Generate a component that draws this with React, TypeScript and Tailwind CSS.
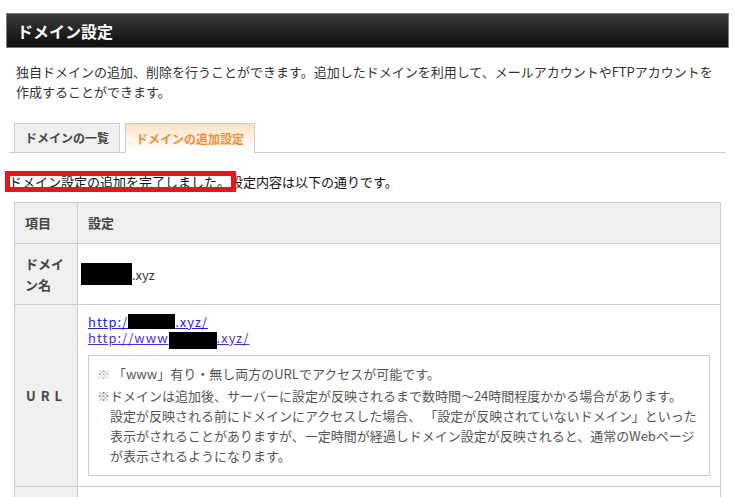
const font = {fontFamily: '"Noto Sans CJK JP", "Noto Sans", sans-serif'};

function Redacted({w, h, className = ""}: {w: string; h: string; className?: string}) {
    return <span className={`inline-block bg-black align-middle ${w} ${h} ${className}`}/>;
}

export default function App() {
    return (
        <div style={font} className="relative w-[735px] h-[497px] overflow-hidden bg-white pt-[13px] text-[13px] text-[#333]">
            {/* page title bar */}
            <div className="mx-[6px] h-[35px] flex items-center border border-[#7a7a7a] bg-gradient-to-b from-[#3c3c3c] to-[#0e0e0e] pl-[10px]">
                <h1 className="text-[16px] font-bold text-white leading-none">ドメイン設定</h1>
            </div>

            <p className="mt-[14px] pl-[16px] pr-[14px] leading-[20px]">
                独自ドメインの追加、削除を行うことができます。追加したドメインを利用して、メールアカウントやFTPアカウントを作成することができます。
            </p>

            {/* tabs */}
            <div className="mt-[21px] mx-[9px] flex gap-[5px] pl-[5px] border-b border-[#cccccc]">
                <div className="w-[106px] h-[29px] flex items-center justify-center border border-b-0 border-[#cccccc] bg-[#f0f0f0] text-[12px] font-bold text-[#444]">
                    ドメインの一覧
                </div>
                <div className="w-[130px] h-[30px] -mb-px flex items-center justify-center border border-b-0 border-[#cccccc] bg-gradient-to-b from-[#fde0c2] via-[#fff4ea] to-white text-[12px] font-bold text-[#f28a35]">
                    ドメインの追加設定
                </div>
            </div>

            {/* result message */}
            <div className="relative mt-[19px] pl-[9px] leading-[20px] text-[#111]">
                ドメイン設定の追加を完了しました。設定内容は以下の通りです。
                <div className="absolute left-[5px] -top-[1px] w-[231px] h-[21px] border-[5px] border-[#e8141e]"/>
            </div>

            {/* settings table */}
            <table className="mt-[10px] ml-[14px] w-[707px] border-collapse table-fixed">
                <colgroup>
                    <col className="w-[63px]"/>
                    <col/>
                </colgroup>
                <tbody>
                <tr className="h-[41px]">
                    <th className="border border-[#cccccc] bg-[#f0f0f0] pl-[10px] text-left font-bold text-[#444]">項目</th>
                    <th className="border border-[#cccccc] bg-[#f0f0f0] pl-[10px] text-left font-bold text-[#444]">設定</th>
                </tr>
                <tr className="h-[61px]">
                    <th className="border border-[#cccccc] bg-[#f0f0f0] pl-[10px] pr-[6px] text-left font-bold leading-[21px] text-[#444]">ドメイン名</th>
                    <td className="border border-[#cccccc] pl-[3px]">
                        <Redacted w="w-[51px]" h="h-[22px]"/>
                        <span className="align-middle">.xyz</span>
                    </td>
                </tr>
                <tr className="h-[182px]">
                    <th className="border border-[#cccccc] bg-[#f0f0f0] pl-[11px] text-left font-bold tracking-[5px] text-[#444]">URL</th>
                    <td className="border border-[#cccccc] px-[10px] pt-[9px] pb-[10px] align-top">
                        <div className="leading-[16px] tracking-[1px]">
                            <a href="#" className="underline text-[#2222e6]">
                                http:/<Redacted w="w-[47px]" h="h-[15px]" className="-mt-[3px]"/>.xyz/
                            </a>
                        </div>
                        <div className="leading-[16px] tracking-[1px]">
                            <a href="#" className="underline text-[#4a2fd8]">
                                http://www<Redacted w="w-[48px]" h="h-[17px]" className="-mb-[2px]"/>.xyz/
                            </a>
                        </div>
                        <div className="mt-[8px] border border-[#cccccc] pl-[8px] pr-[8px] pt-[8px] pb-[9px] leading-[20px] text-[#555]">
                            <p className="pl-[13px] -indent-[13px]">
                                <span className="text-[#b0b0b0]">※</span> 「www」有り・無し両方のURLでアクセスが可能です。
                            </p>
                            <p className="mt-[2px] pl-[13px] -indent-[13px]">
                                <span className="text-[#888]">※</span>ドメインは追加後、サーバーに設定が反映されるまで数時間～24時間程度かかる場合があります。<br/>
                                設定が反映される前にドメインにアクセスした場合、 「設定が反映されていないドメイン」といった<br/>
                                表示がされることがありますが、一定時間が経過しドメイン設定が反映されると、通常のWebページ<br/>
                                が表示されるようになります。
                            </p>
                        </div>
                    </td>
                </tr>
                <tr className="h-[40px]">
                    <th className="border border-[#cccccc] bg-[#f0f0f0]"/>
                    <td className="border border-[#cccccc]"/>
                </tr>
                </tbody>
            </table>
        </div>
    );
}
